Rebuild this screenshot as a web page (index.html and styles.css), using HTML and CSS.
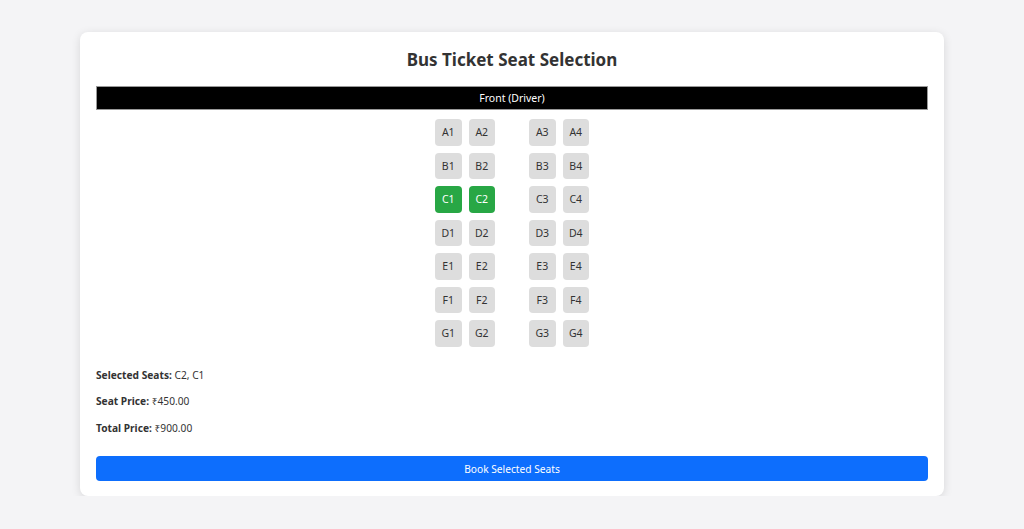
FILE: index.html
```html
<!DOCTYPE html>
<html lang="en">
<head>
<meta charset="utf-8">
<title>Bus Ticket Seat Selection</title>
<link rel="stylesheet" href="styles.css">
</head>
<body>
<div class="container">
  <h2 class="title">Bus Ticket Seat Selection</h2>
  <div class="front">Front (Driver)</div>
  <div class="bus">
    <div class="row"><div class="side"><div class="seat">A1</div><div class="seat">A2</div></div><div class="side"><div class="seat">A3</div><div class="seat">A4</div></div></div>
    <div class="row"><div class="side"><div class="seat">B1</div><div class="seat">B2</div></div><div class="side"><div class="seat">B3</div><div class="seat">B4</div></div></div>
    <div class="row"><div class="side"><div class="seat selected">C1</div><div class="seat selected">C2</div></div><div class="side"><div class="seat">C3</div><div class="seat">C4</div></div></div>
    <div class="row"><div class="side"><div class="seat">D1</div><div class="seat">D2</div></div><div class="side"><div class="seat">D3</div><div class="seat">D4</div></div></div>
    <div class="row"><div class="side"><div class="seat">E1</div><div class="seat">E2</div></div><div class="side"><div class="seat">E3</div><div class="seat">E4</div></div></div>
    <div class="row"><div class="side"><div class="seat">F1</div><div class="seat">F2</div></div><div class="side"><div class="seat">F3</div><div class="seat">F4</div></div></div>
    <div class="row"><div class="side"><div class="seat">G1</div><div class="seat">G2</div></div><div class="side"><div class="seat">G3</div><div class="seat">G4</div></div></div>
  </div>
  <div class="summary">
    <p><strong>Selected Seats:</strong> C2, C1</p>
    <p><strong>Seat Price:</strong> ₹450.00</p>
    <p><strong>Total Price:</strong> ₹900.00</p>
  </div>
  <button class="book">Book Selected Seats</button>
</div>
</body>
</html>
```
FILE: styles.css
```css
* { box-sizing: border-box; }
html, body { margin: 0; padding: 0; }
body {
  background: #f4f4f6;
  font-family: "Noto Sans", "Open Sans", sans-serif;
  color: #333;
  padding: 32px 80px 0 80px;
}
.container {
  background: #fff;
  border-radius: 8px;
  box-shadow: 0 2px 10px rgba(0,0,0,0.12);
  padding: 16px 16px 15px 16px;
}
.title {
  margin: 0;
  text-align: center;
  font-size: 17px;
  font-weight: 700;
  line-height: 24px;
  height: 38px;
  color: #333;
}
.front {
  background: #000;
  color: #fff;
  text-align: center;
  font-size: 10.5px;
  line-height: 23px;
  height: 24px;
  border: 1px solid #999;
}
.bus {
  display: flex;
  flex-direction: column;
  align-items: center;
  gap: 7px;
  margin-top: 9px;
}
.row {
  display: flex;
  gap: 34px;
}
.side {
  display: flex;
  gap: 7px;
}
.seat {
  width: 26.5px;
  height: 26.5px;
  background: #ddd;
  border-radius: 4px;
  font-size: 10.5px;
  display: flex;
  align-items: center;
  justify-content: center;
  color: #333;
}
.seat.selected {
  background: #28a745;
  color: #fff;
}
.summary {
  margin-top: 20px;
}
.summary p {
  margin: 0;
  font-size: 10.2px;
  line-height: 16px;
  height: 26.5px;
}
.summary strong { font-weight: 700; }
.book {
  display: block;
  width: 100%;
  height: 25px;
  margin-top: 10px;
  background: #0d6efd;
  color: #fff;
  border: none;
  border-radius: 4px;
  font-family: inherit;
  font-size: 10.2px;
}
```
